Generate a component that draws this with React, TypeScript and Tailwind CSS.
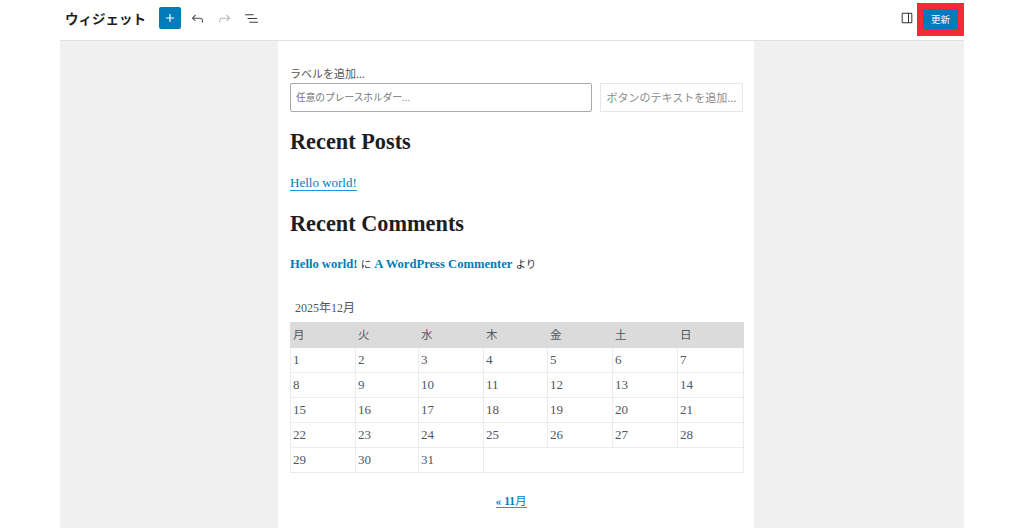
import React from 'react'

const serif = "font-['Liberation_Serif','Noto_Sans_CJK_JP',serif]"
const jp = "font-['Noto_Sans_CJK_JP',sans-serif]"

const days = ['月', '火', '水', '木', '金', '土', '日']
const weeks = [
  [1, 2, 3, 4, 5, 6, 7],
  [8, 9, 10, 11, 12, 13, 14],
  [15, 16, 17, 18, 19, 20, 21],
  [22, 23, 24, 25, 26, 27, 28],
]
const widths = ['w-[65px]', 'w-[63px]', 'w-[65px]', 'w-[64px]', 'w-[65px]', 'w-[65px]', 'w-[66px]']

const Toolbar = () => {
  return (
    <div className="mx-[60px] flex h-10 items-center justify-between pb-[4px] pl-[5px]">
      <div className="flex items-center">
        <h1 className={`${jp} w-[81px] whitespace-nowrap text-[13.5px] font-bold text-[#1e1e1e]`}>ウィジェット</h1>
        <button className="ml-[13px] flex h-[22px] w-[22px] items-center justify-center rounded-[2px] bg-[#007cba]">
          <svg width="14" height="14" viewBox="0 0 24 24" fill="#fff">
            <path d="M11 5h2v6h6v2h-6v6h-2v-6H5v-2h6z" />
          </svg>
        </button>
        <svg className="ml-[8px]" width="17" height="17" viewBox="0 0 24 24" fill="#1e1e1e" opacity="0.8">
          <path d="M18.3 11.7c-.6-.6-1.4-.9-2.3-.9H6.7l2.9-3.3-1.1-1-4.5 5L8.5 16l1-1-2.7-2.7H16c.5 0 .9.2 1.3.5 1 1 1 3.4 1 4.5v.3h1.5v-.2c0-1.5 0-4.3-1.5-5.7z" />
        </svg>
        <svg className="ml-[10px]" width="17" height="17" viewBox="0 0 24 24" fill="#1e1e1e" opacity="0.3">
          <path d="M15.6 6.5l-1.1 1 2.9 3.3H8c-.9 0-1.7.3-2.3.9-1.4 1.5-1.4 4.2-1.4 5.6v.2h1.5v-.3c0-1.1 0-3.5 1-4.5.3-.3.7-.5 1.3-.5h9.2L14.5 15l1.1 1.1 4.6-4.6-4.6-5z" />
        </svg>
        <svg className="ml-[10px]" width="17" height="17" viewBox="0 0 24 24" fill="#1e1e1e" opacity="0.85">
          <path d="M3 6h12v1.5H3zM6.5 11.25H20v1.5H6.5zM9 16.5h12V18H9z" />
        </svg>
      </div>
      <div className="flex items-center">
        <svg width="16" height="16" viewBox="0 0 24 24" fill="#1e1e1e" opacity="0.9">
          <path d="M18 4H6a2 2 0 0 0-2 2v12a2 2 0 0 0 2 2h12a2 2 0 0 0 2-2V6a2 2 0 0 0-2-2zM5.5 18V6c0-.3.2-.5.5-.5h7.5v13H6a.5.5 0 0 1-.5-.5zm13 0c0 .3-.2.5-.5.5h-3v-13h3c.3 0 .5.2.5.5z" />
        </svg>
        <div className="ml-[2px] mt-[3px] flex h-[33px] w-[47px] items-center justify-center bg-[#f52a36]">
          <button className={`${jp} mb-[1px] h-[20px] w-[35px] rounded-[2px] bg-[#007cba] text-[9.5px] text-white`}>更新</button>
        </div>
      </div>
    </div>
  )
}

const SearchBlock = () => {
  return (
    <div className={jp}>
      <div className="text-[11px] leading-[18px] text-[#555]">ラベルを追加...</div>
      <div className="mt-[1px] flex gap-[8px]">
        <div className="flex h-[29px] w-[302px] items-center rounded-[2px] border border-[#a9a9a9] pl-[5px] text-[9.7px] text-[#757575]">
          任意のプレースホルダー...
        </div>
        <div className="flex h-[29px] w-[143px] items-center justify-center whitespace-nowrap border border-[#e6e6e6] text-[11px] text-[#8c8c8c]">
          ボタンのテキストを追加...
        </div>
      </div>
    </div>
  )
}

const Calendar = () => {
  return (
    <div className={`${serif} text-[13px] text-[#50575e]`}>
      <div className="pl-[5px] text-[12px] leading-[20px]">2025年12月</div>
      <table className="mt-[4px] w-[453px] table-fixed border-collapse">
        <thead>
          <tr className="h-[25px] bg-[#dbdbdb]">
            {days.map((d, i) => (
              <th key={d} className={`${widths[i]} border border-[#dbdbdb] pl-[2px] text-left text-[11.5px] font-normal ${jp}`}>
                {d}
              </th>
            ))}
          </tr>
        </thead>
        <tbody>
          {weeks.map((w) => (
            <tr key={w[0]} className="h-[25px]">
              {w.map((n) => (
                <td key={n} className="border border-[#ececec] pl-[2px]">{n}</td>
              ))}
            </tr>
          ))}
          <tr className="h-[25px]">
            <td className="border border-[#ececec] pl-[2px]">29</td>
            <td className="border border-[#ececec] pl-[2px]">30</td>
            <td className="border border-[#ececec] pl-[2px]">31</td>
            <td colSpan={4} className="border border-[#ececec]"></td>
          </tr>
        </tbody>
      </table>
      <div className="mt-[18px] pr-[11px] text-center">
        <a className="border-b border-[#2a93d5] text-[11.5px] font-bold text-[#007cba]">« 11<span className="font-normal">月</span></a>
      </div>
    </div>
  )
}

const App = () => {
  return (
    <div className="h-[528px] w-[1024px] overflow-hidden bg-white">
      <Toolbar />
      <div className="mx-[60px] flex h-[488px] border-t border-[#e0e0e0] bg-[#f0f0f0] pl-[218px]">
        <main className={`${serif} w-[476px] bg-white pl-[12px] pr-[11px] pt-[23px]`}>
          <SearchBlock />
          <h2 className="mt-[15px] text-[22.3px] font-bold leading-[30px] text-[#1e1e1e]">Recent Posts</h2>
          <p className="mt-[14px] text-[13px] leading-[24px]">
            <a className="border-b border-[#2a93d5] text-[#007cba]">Hello world!</a>
          </p>
          <h2 className="mt-[14px] text-[22.3px] font-bold leading-[30px] text-[#1e1e1e]">Recent Comments</h2>
          <p className="mt-[13px] text-[12.6px] leading-[24px] text-[#333]">
            <a className="font-bold text-[#007cba]">Hello world!</a> <span className="text-[10.5px]">に</span>{' '}
            <a className="font-bold text-[#007cba]">A WordPress Commenter</a> <span className="text-[10.5px]">より</span>
          </p>
          <div className="mt-[21px]">
            <Calendar />
          </div>
        </main>
      </div>
    </div>
  )
}

export default App
